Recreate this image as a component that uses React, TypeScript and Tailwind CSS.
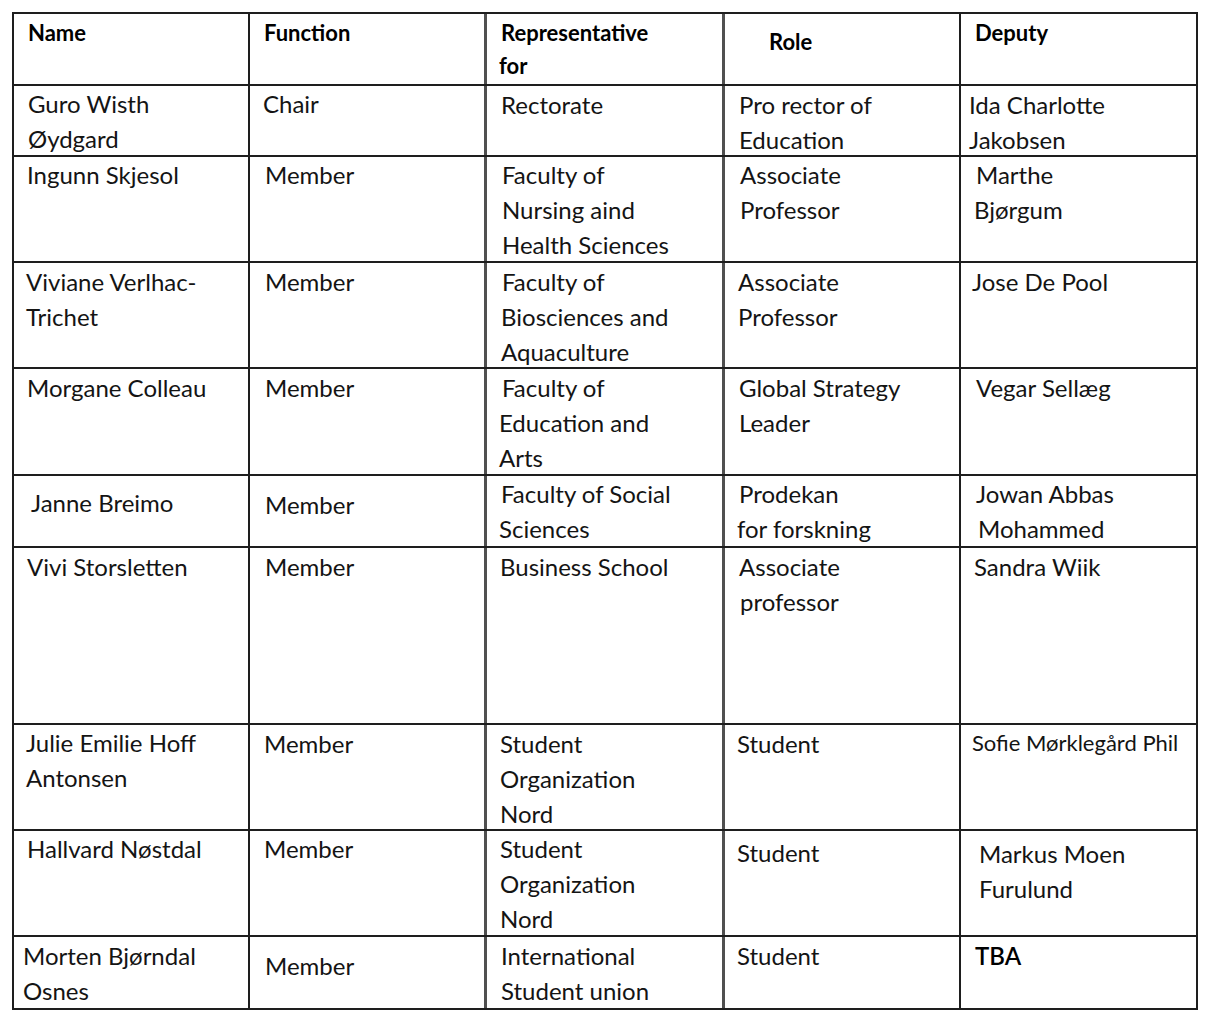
import React from "react";

type Line = string | [string, string];
type Cell = { lines: Line[]; cls: string };
type Row = { h: string; cells: Cell[] };

// column widths include the right-hand rule of each cell
const colClass = [
  "w-[236px] border-r-2 border-r-[#1e1e1e]",
  "w-[237px] border-r-[3px] border-r-[#505050]",
  "w-[238px] border-r-[3px] border-r-[#505050]",
  "w-[236px] border-r-2 border-r-[#1e1e1e]",
  "w-[235px]",
];

const header: Cell[] = [
  { lines: ["Name"], cls: "pl-[14px] pt-[2px]" },
  { lines: ["Function"], cls: "pl-[14px] pt-[2px]" },
  { lines: ["Representative", ["for", "-ml-[2px]"]], cls: "pl-[14px] pt-[2px]" },
  { lines: ["Role"], cls: "pl-[44px] pt-[11px]" },
  { lines: ["Deputy"], cls: "pl-[14px] pt-[2px]" },
];

const rows: Row[] = [
  {
    h: "h-[71px]",
    cells: [
      { lines: ["Guro Wisth", "Øydgard"], cls: "pl-[14px] pt-[0px]" },
      { lines: ["Chair"], cls: "pl-[13px] pt-[0px]" },
      { lines: ["Rectorate"], cls: "pl-[14px] pt-[1px]" },
      { lines: ["Pro rector of", "Education"], cls: "pl-[14px] pt-[1px]" },
      { lines: ["Ida Charlotte", "Jakobsen"], cls: "pl-[8px] pt-[1px]" },
    ],
  },
  {
    h: "h-[106px]",
    cells: [
      { lines: ["Ingunn Skjesol"], cls: "pl-[13px] pt-[0px]" },
      { lines: ["Member"], cls: "pl-[15px] pt-[0px]" },
      { lines: ["Faculty of", "Nursing aind", "Health Sciences"], cls: "pl-[15px] pt-[0px]" },
      { lines: ["Associate", "Professor"], cls: "pl-[15px] pt-[0px]" },
      { lines: ["Marthe", ["Bjørgum", "-ml-[2px]"]], cls: "pl-[15px] pt-[0px]" },
    ],
  },
  {
    h: "h-[106px]",
    cells: [
      { lines: ["Viviane Verlhac-", "Trichet"], cls: "pl-[12px] pt-[1px]" },
      { lines: ["Member"], cls: "pl-[15px] pt-[1px]" },
      {
        lines: ["Faculty of", ["Biosciences and", "-ml-[1px]"], ["Aquaculture", "-ml-[1px]"]],
        cls: "pl-[15px] pt-[1px]",
      },
      { lines: ["Associate", "Professor"], cls: "pl-[13px] pt-[1px]" },
      { lines: ["Jose De Pool"], cls: "pl-[11px] pt-[1px]" },
    ],
  },
  {
    h: "h-[107px]",
    cells: [
      { lines: ["Morgane Colleau"], cls: "pl-[13px] pt-[1px]" },
      { lines: ["Member"], cls: "pl-[15px] pt-[1px]" },
      {
        lines: ["Faculty of", ["Education and", "-ml-[3px]"], ["Arts", "-ml-[3px]"]],
        cls: "pl-[15px] pt-[1px]",
      },
      { lines: ["Global Strategy", "Leader"], cls: "pl-[14px] pt-[1px]" },
      { lines: ["Vegar Sellæg"], cls: "pl-[15px] pt-[1px]" },
    ],
  },
  {
    h: "h-[72px]",
    cells: [
      { lines: ["Janne Breimo"], cls: "pl-[17px] pt-[9px]" },
      { lines: ["Member"], cls: "pl-[15px] pt-[11px]" },
      { lines: ["Faculty of Social", ["Sciences", "-ml-[2px]"]], cls: "pl-[14px] pt-[0px]" },
      { lines: ["Prodekan", ["for forskning", "-ml-[2px]"]], cls: "pl-[14px] pt-[0px]" },
      { lines: ["Jowan Abbas", ["Mohammed", "ml-[2px]"]], cls: "pl-[15px] pt-[0px]" },
    ],
  },
  {
    h: "h-[177px]",
    cells: [
      { lines: ["Vivi Storsletten"], cls: "pl-[13px] pt-[1px]" },
      { lines: ["Member"], cls: "pl-[15px] pt-[1px]" },
      { lines: ["Business School"], cls: "pl-[13px] pt-[1px]" },
      { lines: ["Associate", ["professor", "ml-[1px]"]], cls: "pl-[14px] pt-[1px]" },
      { lines: ["Sandra Wiik"], cls: "pl-[13px] pt-[1px]" },
    ],
  },
  {
    h: "h-[106px]",
    cells: [
      { lines: ["Julie Emilie Hoff", "Antonsen"], cls: "pl-[12px] pt-[0px]" },
      { lines: ["Member"], cls: "pl-[14px] pt-[1px]" },
      { lines: ["Student", "Organization", "Nord"], cls: "pl-[13px] pt-[1px]" },
      { lines: ["Student"], cls: "pl-[12px] pt-[1px]" },
      {
        lines: [["Sofie Mørklegård Phil", "text-[22px]"]],
        cls: "pl-[11px] pt-[0px]",
      },
    ],
  },
  {
    h: "h-[106px]",
    cells: [
      { lines: ["Hallvard Nøstdal"], cls: "pl-[13px] pt-[0px]" },
      { lines: ["Member"], cls: "pl-[14px] pt-[0px]" },
      { lines: ["Student", "Organization", "Nord"], cls: "pl-[13px] pt-[0px]" },
      { lines: ["Student"], cls: "pl-[12px] pt-[4px]" },
      { lines: ["Markus Moen", "Furulund"], cls: "pl-[18px] pt-[5px]" },
    ],
  },
  {
    h: "h-[71px]",
    cells: [
      { lines: ["Morten Bjørndal", "Osnes"], cls: "pl-[9px] pt-[1px]" },
      { lines: ["Member"], cls: "pl-[15px] pt-[11px]" },
      { lines: ["International", "Student union"], cls: "pl-[14px] pt-[1px]" },
      { lines: ["Student"], cls: "pl-[12px] pt-[1px]" },
      { lines: [["TBA", "font-semibold text-black"]], cls: "pl-[14px] pt-[1px]" },
    ],
  },
];

const CellLines: React.FC<{ cell: Cell }> = ({ cell }) => (
  <>
    {cell.lines.map((ln, i) => {
      const [text, extra] = typeof ln === "string" ? [ln, ""] : ln;
      return (
        <div key={i} className={`whitespace-nowrap ${extra}`}>
          {text}
        </div>
      );
    })}
  </>
);

export default function App() {
  return (
    <div className="min-h-screen bg-white pt-[12px] pl-[12px] font-['Lato',sans-serif] text-[#141414]">
      <div className="w-[1186px] border-2 border-[#1e1e1e]">
        {/* header row */}
        <div className="flex h-[72px] border-b-2 border-b-[#1e1e1e] text-[22px] font-bold leading-[33px] text-black">
          {header.map((c, i) => (
            <div key={i} className={`${colClass[i]} ${c.cls} h-full shrink-0`}>
              <CellLines cell={c} />
            </div>
          ))}
        </div>

        {rows.map((r, ri) => (
          <div
            key={ri}
            className={`flex ${r.h} text-[24px] leading-[35px] ${
              ri < rows.length - 1 ? "border-b-2 border-b-[#1e1e1e]" : ""
            }`}
          >
            {r.cells.map((c, i) => (
              <div key={i} className={`${colClass[i]} ${c.cls} h-full shrink-0`}>
                <CellLines cell={c} />
              </div>
            ))}
          </div>
        ))}
      </div>
    </div>
  );
}
